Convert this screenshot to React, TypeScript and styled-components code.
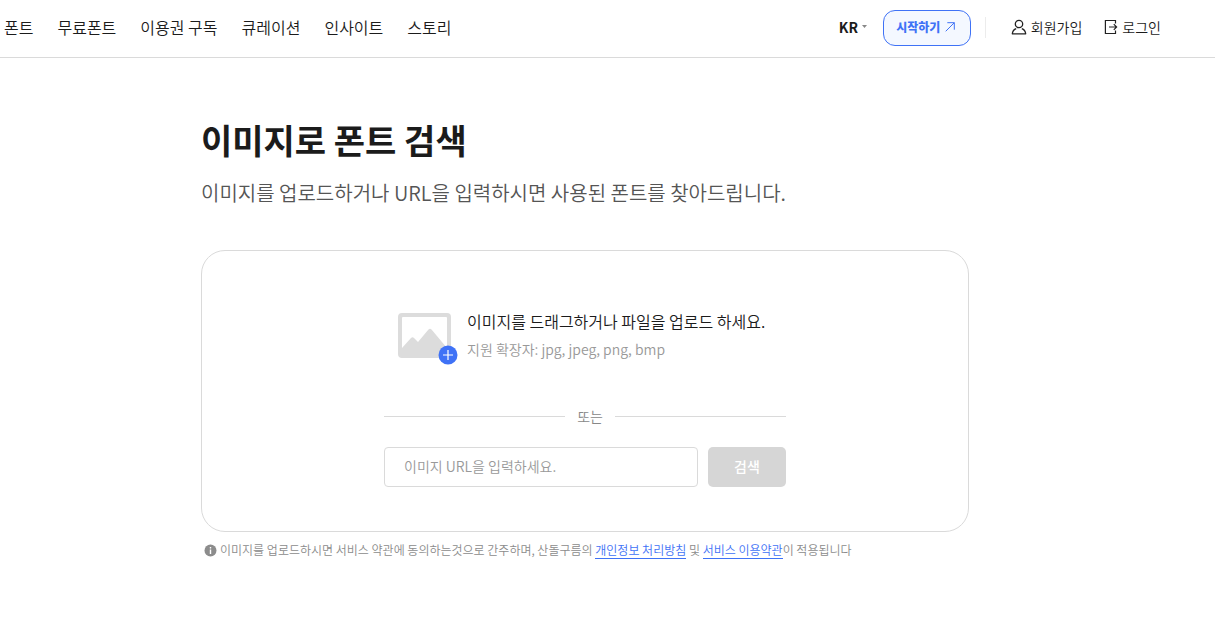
import React, { useState } from "react";
import styled, { createGlobalStyle } from "styled-components";

const GlobalStyle = createGlobalStyle`
  * { box-sizing: border-box; }
  body {
    margin: 0;
    background: #fff;
    color: #1b1b1b;
    font-family: "Noto Sans CJK KR", sans-serif;
    font-weight: 350;
  }
  button, input, select { font: inherit; }
  a { color: inherit; text-decoration: none; }
`;

const Header = styled.header`
  display: flex;
  align-items: center;
  justify-content: space-between;
  height: 58px;
  padding: 0 54px 2px 4px;
  border-bottom: 1px solid #dadada;
`;

const Nav = styled.nav`
  display: flex;
  gap: 24px;
  padding-bottom: 2px;
  font-size: 16px;
  line-height: 24px;
  white-space: nowrap;
`;

const Tools = styled.div`
  display: flex;
  align-items: center;
  font-size: 14px;
  line-height: 20px;
  white-space: nowrap;
`;

const Language = styled.label`
  display: flex;
  align-items: center;
  gap: 4px;
  margin-right: 16px;
  padding-bottom: 2px;
`;

const LanguageSelect = styled.select`
  width: 19px;
  padding: 0;
  appearance: none;
  border: 0;
  background: none;
  color: #1b1b1b;
  font-weight: 700;
`;

const StartButton = styled.button`
  display: flex;
  align-items: center;
  justify-content: center;
  gap: 5px;
  width: 88px;
  height: 36px;
  padding: 0 2px 2px 0;
  border: 1px solid #3f72f6;
  border-radius: 12px;
  background: #f4f8ff;
  color: #3f72f6;
  font-size: 12px;
  font-weight: 900;
`;

const Divider = styled.span`
  width: 1px;
  height: 21px;
  margin: 0 25px 0 14px;
  background: #ececec;
`;

const Account = styled.div`
  display: flex;
  gap: 22px;
  padding-bottom: 2px;
`;

const AccountLink = styled.a`
  display: flex;
  align-items: center;
  gap: 4px;
`;

const Main = styled.main`
  padding: 58px 45px 60px 0;
`;

const Content = styled.div`
  max-width: 768px;
  margin: 0 auto;
`;

const Title = styled.h1`
  margin: 0;
  font-size: 34px;
  line-height: 48px;
  font-weight: 700;
`;

const Subtitle = styled.p`
  margin: 14px 0 0;
  color: #555;
  font-size: 20px;
  line-height: 30px;
  font-weight: 350;
`;

const Card = styled.section`
  margin-top: 42px;
  padding: 58px 20px 44px;
  border: 1px solid #dadada;
  border-radius: 24px;
`;

const Form = styled.form`
  max-width: 402px;
  margin: 0 auto;
`;

const Upload = styled.div`
  display: flex;
  gap: 8px;
  padding-left: 14px;
`;

const UploadText = styled.div`
  display: flex;
  flex-direction: column;
  gap: 6px;
`;

const UploadTitle = styled.strong`
  font-size: 16px;
  line-height: 24px;
  font-weight: 350;
`;

const Formats = styled.span`
  color: #999;
  font-size: 14px;
  line-height: 20px;
`;

const Separator = styled.div`
  display: flex;
  align-items: center;
  gap: 12px;
  margin: 41px 0 21px;
  color: #888;
  font-size: 14px;
  line-height: 20px;
  &::before, &::after {
    content: "";
    flex: 18;
    height: 1px;
    background: #dadada;
  }
  &::after { flex: 17; }
`;

const SearchRow = styled.div`
  display: flex;
  gap: 10px;
`;

const UrlInput = styled.input`
  flex: 1;
  min-width: 0;
  height: 40px;
  padding: 0 19px 2px;
  border: 1px solid #dadada;
  border-radius: 4px;
  font-size: 14px;
  &::placeholder { color: #999; opacity: 1; }
`;

const SearchButton = styled.button`
  width: 78px;
  height: 40px;
  padding: 0 0 2px;
  border: 0;
  border-radius: 5px;
  background: #d6d6d6;
  color: #fff;
  font-size: 14px;
  font-weight: 500;
`;

const Notice = styled.p`
  display: flex;
  align-items: center;
  gap: 3px;
  margin: 8px 0 0;
  padding-left: 3px;
  color: #8c8c8c;
  font-size: 12px;
  line-height: 20px;
`;

const PolicyLink = styled.a`
  border-bottom: 1px solid #3f72f6;
  color: #3f72f6;
`;

const ArrowIcon = () => (
  <svg width="10" height="10" viewBox="0 0 10 10" fill="none" stroke="currentColor" aria-hidden="true">
    <path d="M.7 9.3 9.3.7M2.3.7h7v7" />
  </svg>
);

const UserIcon = () => (
  <svg width="16" height="16" viewBox="0 0 16 16" fill="none" stroke="#222" strokeWidth="1.3" aria-hidden="true">
    <circle cx="8" cy="5" r="3.7" />
    <path d="M5.2 9.7C3 10.5 1.6 12.3 1.3 14.8h13.4c-.3-2.5-1.7-4.3-3.9-5.1" strokeLinejoin="round" />
  </svg>
);

const LoginIcon = () => (
  <svg width="14" height="16" viewBox="0 0 14 16" fill="none" stroke="#222" strokeWidth="1.2" aria-hidden="true">
    <path d="M11.5 4.5v-3H1.4v13h10.1v-3M5 8h7.5M9.8 5.2 12.6 8l-2.8 2.8" />
  </svg>
);

const ImageIcon = () => (
  <svg width="61" height="56" viewBox="0 0 61 56" aria-hidden="true">
    <path
      fill="#dcdcdc"
      fillRule="evenodd"
      d="M4 4h45a4 4 0 0 1 4 4v37a4 4 0 0 1-4 4H4a4 4 0 0 1-4-4V8a4 4 0 0 1 4-4Zm1 4a1 1 0 0 0-1 1v30l9-10q1.500-1.500 3 0l4 4 10.500-12.500q1.500-1.500 3 0L49 39V9a1 1 0 0 0-1-1Z"
    />
    <circle cx="50" cy="46" r="9.5" fill="#3f72f6" />
    <path d="M50 41v10M45 46h10" stroke="#fff" strokeWidth="1.2" />
  </svg>
);

const InfoIcon = () => (
  <svg width="13" height="13" viewBox="0 0 13 13" aria-hidden="true">
    <circle cx="6.5" cy="6.5" r="6" fill="#8c8c8c" />
    <path d="M6.5 3v1.4M6.5 5.5V10" stroke="#fff" strokeWidth="1.4" />
  </svg>
);

const menu = ["폰트", "무료폰트", "이용권 구독", "큐레이션", "인사이트", "스토리"];

export default function App() {
  const [url, setUrl] = useState("");
  return (
    <>
      <GlobalStyle />
      <Header>
        <Nav>
          {menu.map((name) => (
            <a href="#" key={name}>{name}</a>
          ))}
        </Nav>
        <Tools>
          <Language>
            <LanguageSelect aria-label="KR">
              <option>KR</option>
            </LanguageSelect>
            <svg width="5" height="3" viewBox="0 0 5 3" aria-hidden="true">
              <path d="M0 0h5L2.5 3Z" fill="#888" />
            </svg>
          </Language>
          <StartButton type="button">시작하기 <ArrowIcon /></StartButton>
          <Divider />
          <Account>
            <AccountLink href="#"><UserIcon />회원가입</AccountLink>
            <AccountLink href="#"><LoginIcon />로그인</AccountLink>
          </Account>
        </Tools>
      </Header>
      <Main>
        <Content>
          <Title>이미지로 폰트 검색</Title>
          <Subtitle>이미지를 업로드하거나 URL을 입력하시면 사용된 폰트를 찾아드립니다.</Subtitle>
          <Card>
            <Form onSubmit={(e) => e.preventDefault()}>
              <Upload>
                <ImageIcon />
                <UploadText>
                  <UploadTitle>이미지를 드래그하거나 파일을 업로드 하세요.</UploadTitle>
                  <Formats>지원 확장자: jpg, jpeg, png, bmp</Formats>
                </UploadText>
              </Upload>
              <Separator>또는</Separator>
              <SearchRow>
                <UrlInput
                  type="text"
                  aria-label="이미지 URL"
                  placeholder="이미지 URL을 입력하세요."
                  value={url}
                  onChange={(e) => setUrl(e.target.value)}
                />
                <SearchButton type="submit">검색</SearchButton>
              </SearchRow>
            </Form>
          </Card>
          <Notice>
            <InfoIcon />
            <span>
              이미지를 업로드하시면 서비스 약관에 동의하는것으로 간주하며, 산돌구름의{" "}
              <PolicyLink href="#">개인정보 처리방침</PolicyLink> 및{" "}
              <PolicyLink href="#">서비스 이용약관</PolicyLink>이 적용됩니다
            </span>
          </Notice>
        </Content>
      </Main>
    </>
  );
}
